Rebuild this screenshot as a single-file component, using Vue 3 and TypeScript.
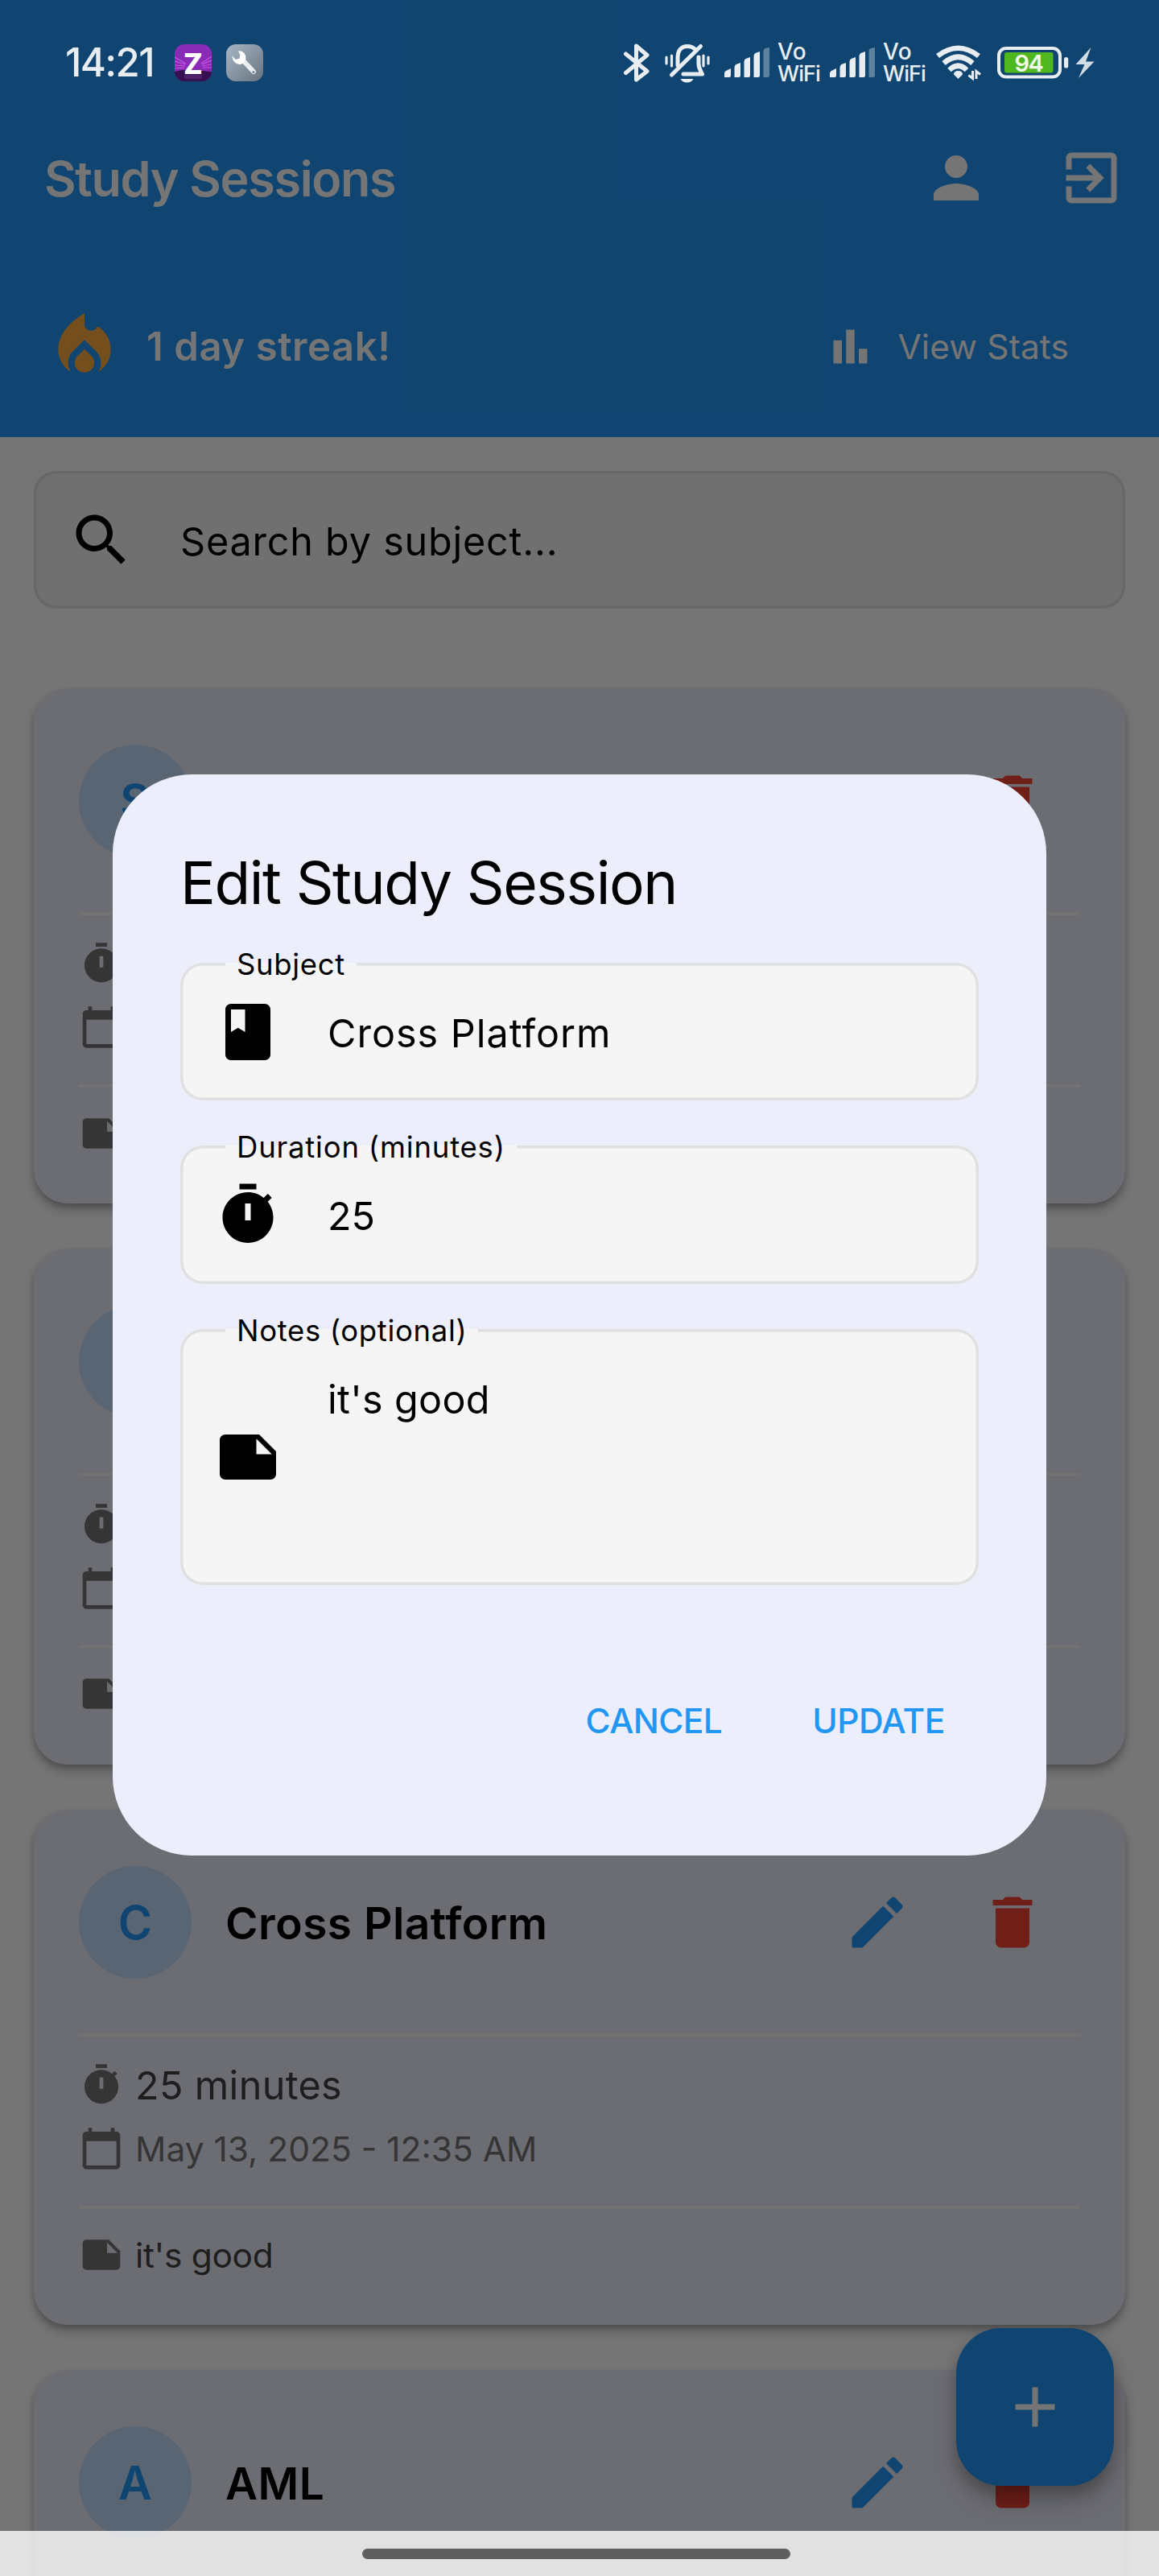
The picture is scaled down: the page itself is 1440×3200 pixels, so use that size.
<script setup lang="ts">
interface Session {
  subject: string
  minutes: number
  date: string
  notes: string
}

interface Field {
  label: string
  value: string
  icon: keyof typeof icons
  kind: string
}

// Material glyph outlines on a 24x24 grid
const icons = {
  person: 'M12 12c2.21 0 4-1.79 4-4s-1.79-4-4-4-4 1.79-4 4 1.79 4 4 4zm0 2c-2.67 0-8 1.34-8 4v2h16v-2c0-2.66-5.33-4-8-4z',
  exit: 'M10.09 15.59L11.5 17l5-5-5-5-1.41 1.41L12.67 11H3v2h9.67l-2.58 2.59zM19 3H5c-1.11 0-2 .9-2 2v4h2V5h14v14H5v-4H3v4c0 1.1.89 2 2 2h14c1.1 0 2-.9 2-2V5c0-1.1-.9-2-2-2z',
  fire: 'M16 6l-.44.55C14.38 8.02 12 7.19 12 5.3V2S4 6 4 13c0 2.92 1.56 5.47 3.89 6.86-.56-.79-.89-1.76-.89-2.8 0-1.32.52-2.56 1.47-3.5L12 10.1l3.53 3.47c.95.93 1.47 2.17 1.47 3.5 0 1.02-.31 1.96-.85 2.75 1.89-1.15 3.29-3.06 3.71-5.3.66-3.55-1.07-6.9-3.86-8.52zM12 12.9l-2.13 2.09c-.56.56-.87 1.29-.87 2.07C9 18.68 10.35 20 12 20s3-1.32 3-2.94c0-.78-.31-1.52-.87-2.07L12 12.9z',
  chart: 'M4 9h4v11H4zM16 13h4v7h-4zM10 4h4v16h-4z',
  search: 'M15.5 14h-.79l-.28-.27C15.41 12.59 16 11.11 16 9.5 16 5.91 13.09 3 9.5 3S3 5.91 3 9.5 5.91 16 9.5 16c1.61 0 3.09-.59 4.23-1.57l.27.28v.79l5 4.99L20.49 19l-4.99-5zm-6 0C7.01 14 5 11.99 5 9.5S7.01 5 9.5 5 14 7.01 14 9.5 11.99 14 9.5 14z',
  edit: 'M3 17.25V21h3.75L17.81 9.94l-3.75-3.75L3 17.25zM20.71 7.04c.39-.39.39-1.02 0-1.41l-2.34-2.34c-.39-.39-1.02-.39-1.41 0l-1.83 1.83 3.75 3.75 1.83-1.83z',
  trash: 'M6 19c0 1.1.9 2 2 2h8c1.1 0 2-.9 2-2V7H6v12zM19 4h-3.5l-1-1h-5l-1 1H5v2h14V4z',
  timer: 'M9 1h6v2H9zM19.03 7.39l1.42-1.42c-.43-.51-.9-.99-1.41-1.41l-1.42 1.42C16.07 4.74 14.12 4 12 4c-4.97 0-9 4.03-9 9s4.02 9 9 9 9-4.03 9-9c0-2.12-.74-4.07-1.97-5.61zM13 14h-2V8h2v6z',
  calendar: 'M20 3h-1V1h-2v2H7V1H5v2H4c-1.1 0-2 .9-2 2v16c0 1.1.9 2 2 2h16c1.1 0 2-.9 2-2V5c0-1.1-.9-2-2-2zm0 18H4V8h16v13z',
  note: 'M22 10l-6-6H4c-1.1 0-2 .9-2 2v12.01c0 1.1.9 1.99 2 1.99l16-.01c1.1 0 2-.89 2-1.99v-8zm-7-4.5l5.5 5.5H15V5.5z',
  book: 'M18 2H6c-1.1 0-2 .9-2 2v16c0 1.1.9 2 2 2h12c1.1 0 2-.9 2-2V4c0-1.1-.9-2-2-2zM6 4h5v8l-2.5-1.5L6 12V4z',
  add: 'M19 13h-6v6h-2v-6H5v-2h6V5h2v6h6v2z',
}

const sessions: Session[] = [
  { subject: 'Science', minutes: 25, date: 'May 13, 2025 - 12:35 AM', notes: "it's good" },
  { subject: 'Java', minutes: 25, date: 'May 13, 2025 - 12:35 AM', notes: "it's good" },
  { subject: 'Cross Platform', minutes: 25, date: 'May 13, 2025 - 12:35 AM', notes: "it's good" },
  { subject: 'AML', minutes: 25, date: 'May 13, 2025 - 12:35 AM', notes: "it's good" },
]

// The dialog hides the texts of the first two cards completely
const covered = (i: number) => i < 2

const fields: Field[] = [
  { label: 'Subject', value: 'Cross Platform', icon: 'book', kind: 'subject' },
  { label: 'Duration (minutes)', value: '25', icon: 'timer', kind: 'duration' },
  { label: 'Notes (optional)', value: "it's good", icon: 'note', kind: 'tall' },
]
</script>

<template>
  <div class="screen">
    <header class="header">
      <div class="appbar">
        <h1 class="app-title">Study Sessions</h1>
        <button class="icon-btn"><svg class="i24" viewBox="0 0 24 24"><path :d="icons.person" /></svg></button>
        <button class="icon-btn"><svg class="i24" viewBox="0 0 24 24"><path :d="icons.exit" /></svg></button>
      </div>
      <div class="streak">
        <svg class="i28" viewBox="0 0 24 24"><path :d="icons.fire" /></svg>
        <span class="streak-text">1 day streak!</span>
        <svg class="i18" viewBox="0 0 24 24"><path :d="icons.chart" /></svg>
        <span class="stats-text">View Stats</span>
      </div>
    </header>

    <main class="content">
      <div class="box search">
        <svg class="i24" viewBox="0 0 24 24"><path :d="icons.search" /></svg>
        <span class="box-text search-text">Search by subject...</span>
      </div>

      <article v-for="(s, i) in sessions" :key="s.subject" class="card">
        <div class="card-head">
          <div class="avatar">{{ s.subject[0] }}</div>
          <h2 class="card-title"><template v-if="!covered(i)">{{ s.subject }}</template></h2>
          <button class="icon-btn edit"><svg class="i24" viewBox="0 0 24 24"><path :d="icons.edit" /></svg></button>
          <button class="icon-btn trash"><svg class="i24" viewBox="0 0 24 24"><path :d="icons.trash" /></svg></button>
        </div>
        <hr class="divider" />
        <div class="details">
          <div class="row">
            <svg class="i16" viewBox="0 0 24 24"><path :d="icons.timer" /></svg>
            <span v-if="i === 2" class="minutes">{{ s.minutes }} minutes</span>
          </div>
          <div class="row">
            <svg class="i16" viewBox="0 0 24 24"><path :d="icons.calendar" /></svg>
            <span v-if="i === 2" class="date">{{ s.date }}</span>
          </div>
        </div>
        <hr class="divider" />
        <div class="row notes">
          <svg class="i16" viewBox="0 0 24 24"><path :d="icons.note" /></svg>
          <span v-if="i === 2" class="note">{{ s.notes }}</span>
        </div>
      </article>
    </main>

    <button class="fab"><svg class="i24" viewBox="0 0 24 24"><path :d="icons.add" /></svg></button>

    <div class="scrim">
      <section class="dialog">
        <h2 class="dialog-title">Edit Study Session</h2>
        <div class="fields">
          <div v-for="f in fields" :key="f.label" class="box field" :class="f.kind">
            <span class="label">{{ f.label }}</span>
            <svg class="i24" viewBox="0 0 24 24"><path :d="icons[f.icon]" /></svg>
            <span class="box-text">{{ f.value }}</span>
          </div>
        </div>
        <div class="actions">
          <button class="text-btn cancel">CANCEL</button>
          <button class="text-btn update">UPDATE</button>
        </div>
      </section>
    </div>

    <div class="statusbar">
      <span class="clock">14:21</span>
      <svg class="app-z" viewBox="0 0 46 46">
        <defs>
          <clipPath id="zclip"><rect width="46" height="46" rx="12" /></clipPath>
        </defs>
        <g clip-path="url(#zclip)">
          <rect width="46" height="46" fill="#8a2bb8" />
          <g stroke="#d55be8" stroke-width="1.2" opacity=".85">
            <path d="M0 16l14 8M0 21l13 4M0 26l13 1M0 30l12-1M46 15l-13 9M46 20l-12 5M46 25l-12 2M46 29l-11 0" />
          </g>
          <path d="M0 34Q10 31 23 32T46 34V46H0Z" fill="#37104f" />
          <rect x="12" y="38" width="22" height="5" rx="2" fill="#5c2a78" opacity=".7" />
          <text x="23" y="37" text-anchor="middle" class="z-letter">Z</text>
        </g>
      </svg>
      <svg class="app-tool" viewBox="0 0 46 46">
        <defs>
          <linearGradient id="tool" x1="0" y1="0" x2="1" y2="1">
            <stop offset="0" stop-color="#a9b6c4" />
            <stop offset="1" stop-color="#66737f" />
          </linearGradient>
        </defs>
        <rect width="46" height="46" rx="12" fill="url(#tool)" />
        <path d="M20 19L34 34" stroke="#e9eef3" stroke-width="6" stroke-linecap="round" />
        <path d="M15 8.500c5-1 10 3 9.300 9.500C24 23 19 26 14.500 24.500 10.500 23.500 7.500 19 7.300 14.500L12 19l4.500-1.500.8-4.500z" fill="#fff" />
        <circle cx="34" cy="34.500" r="1.600" fill="#76838f" />
      </svg>

      <svg class="bt" viewBox="774 52 32 48">
        <path d="M776.500 65L803 86.500 789.500 97V55L803 66.500 776.500 88.500" />
      </svg>
      <svg class="bell" viewBox="825 52 56 50">
        <path d="M841 80V71C841 61 846 56.500 853 56.500c4 0 7.500 1.500 10 4" />
        <path d="M869.500 56.500L833.500 92" />
        <path d="M867 70v8c0 6 2.500 9 4.500 13H848" />
        <path class="thin" d="M827 70v8M833.500 68v13M873 68v13M879 70v8" />
        <path class="solid" d="M844.500 97h16c-1.500 3-4.500 4.500-8 4.500s-6.500-1.500-8-4.500z" />
      </svg>
      <template v-for="n in 2" :key="n">
        <svg class="signal" viewBox="0 0 56 38">
          <path d="M0 37v-5q0-2 2-3l6-3v9q0 2-2 2zM12.500 37V25q0-3 2-4l5.500-2v16q0 2-2 2zM24.500 37V18q0-3 2-4l5.500-2v23q0 2-2 2zM36.500 37V11q0-3 2-4l5.500-2v30q0 2-2 2z" />
          <path d="M48.500 37V5q0-3 2-4L56 0v35q0 2-2 2z" opacity=".36" />
        </svg>
        <span class="vowifi"><span class="vo">Vo</span><span class="wifi-word">WiFi</span></span>
      </template>
      <svg class="wifi" viewBox="1162 54 58 48">
        <path class="arc" d="M1165 69.500Q1190.500 50 1216 69.500M1172.500 78.500Q1190.500 63 1208.500 78.500M1179.500 87Q1190.500 76.500 1201 87" />
        <path class="dot" d="M1190.500 98l-5.500-5.500q0-4.500 5.500-4.500t5.500 4.500z" />
        <path class="arrows" d="M1208.500 88v9.500l-5-4M1213 98v-9.500l5 4" />
      </svg>
      <svg class="battery" viewBox="1239 56 89 42">
        <rect class="shell" x="1241" y="59" width="76" height="35.500" rx="9" />
        <rect x="1248" y="64" width="60.500" height="25.500" rx="3" fill="#50b81f" />
        <rect x="1322" y="70" width="5.200" height="13.500" rx="2.600" fill="#e8edf2" />
        <text x="1278" y="87.700" text-anchor="middle" class="level">94</text>
      </svg>
      <svg class="bolt" viewBox="1336 57 24 40">
        <path d="M1355.500 58L1336.500 79h11L1340 96l19.500-20.500H1349z" />
      </svg>
    </div>

    <div class="navbar"><div class="pill"></div></div>
  </div>
</template>

<style>
body {
  margin: 0;
}
</style>

<style scoped>
.screen {
  position: relative;
  width: 1440px;
  height: 3200px;
  overflow: hidden;
  background: #fff;
  font-family: Inter, "Noto Sans", sans-serif;
  color: #000;
}
h1,
h2,
hr {
  margin: 0;
  border: 0;
}
button {
  border: 0;
  padding: 0;
  background: none;
  font: inherit;
  color: inherit;
}
svg {
  display: block;
  flex: none;
  fill: currentColor;
}
span,
h1,
h2 {
  white-space: nowrap;
}
.i16 { width: 56px; height: 56px; }
.i18 { width: 63px; height: 63px; }
.i24 { width: 84px; height: 84px; }
.i28 { width: 98px; height: 98px; color: #ffab40; }

.icon-btn {
  width: 168px;
  height: 132px;
  display: flex;
  align-items: center;
  justify-content: center;
}

/* header */
.header {
  height: 543px;
  box-sizing: border-box;
  padding-top: 155px;
  background: #2196f3;
  color: #fff;
}
.appbar {
  display: flex;
  align-items: center;
  height: 132px;
  padding-left: 55px;
}
.app-title {
  flex: 1;
  padding-top: 1px;
  font-size: 61px;
  font-weight: 600;
  line-height: 86px;
  letter-spacing: -1.35px;
}
.streak {
  display: flex;
  align-items: center;
  height: 98px;
  margin-top: 94px;
  padding: 0 112px 0 56px;
}
.streak-text {
  flex: 1;
  margin-left: 28px;
  font-size: 49px;
  font-weight: 600;
  letter-spacing: 0.59px;
}
.stats-text {
  margin-left: 27px;
  font-size: 42.5px;
  letter-spacing: 0.11px;
}

/* outlined boxes */
.box {
  position: relative;
  display: flex;
  align-items: center;
  height: 171.3px;
  box-sizing: border-box;
  padding-left: 42px;
  border-radius: 28px;
  background: #f5f5f5;
  box-shadow: inset 0 0 0 3.5px #e0e0e0;
}
.box-text {
  align-self: flex-start;
  margin-left: 57px;
  font-size: 48.5px;
  line-height: 176px;
  letter-spacing: 1px;
}
.search-text {
  margin-left: 56px;
  letter-spacing: 0.79px;
}

/* content */
.content {
  padding: 42px 42px 0;
}
.search {
  margin-bottom: 98.5px;
}
.card {
  height: 640.5px;
  box-sizing: border-box;
  margin-bottom: 56px;
  padding: 70px 56px 0;
  border-radius: 42px;
  background: #eceefb;
  box-shadow: 0 8px 14px rgba(0, 0, 0, 0.24), 0 4px 6px rgba(0, 0, 0, 0.14);
}
.card-head {
  display: flex;
  align-items: center;
  height: 140px;
  margin-bottom: 68.5px;
}
.avatar {
  display: flex;
  align-items: center;
  justify-content: center;
  width: 140px;
  height: 140px;
  border-radius: 50%;
  background: rgba(33, 150, 243, 0.2);
  color: #2196f3;
  font-size: 57.5px;
  font-weight: 600;
}
.card-title {
  flex: 1;
  margin-left: 42px;
  padding-top: 2px;
  font-size: 55px;
  font-weight: 600;
  letter-spacing: 0.5px;
}
.edit { color: #2196f3; }
.trash { color: #f44336; }
.divider {
  height: 3.5px;
  background: #fafaf6;
}
.details {
  padding: 21px 0 31.5px;
}
.row {
  display: flex;
  align-items: center;
  height: 79px;
  color: #757575;
}
.row span {
  margin-left: 14px;
}
.minutes {
  color: #424242;
  font-size: 48.5px;
  letter-spacing: 0.34px;
}
.date {
  font-size: 42.5px;
}
.notes {
  padding-top: 17.5px;
}
.note {
  padding-top: 2px;
  color: #424242;
  font-size: 42.5px;
  letter-spacing: -0.33px;
}
.fab {
  position: absolute;
  left: 1188px;
  top: 2892px;
  width: 196px;
  height: 196px;
  display: flex;
  align-items: center;
  justify-content: center;
  border-radius: 56px;
  background: #2196f3;
  color: #fff;
  box-shadow: 0 21px 35px rgba(0, 0, 0, 0.18), 0 10px 18px rgba(0, 0, 0, 0.2);
}

/* dialog */
.scrim {
  position: absolute;
  inset: 0;
  display: flex;
  justify-content: center;
  align-items: flex-start;
  box-sizing: border-box;
  padding-top: 961.5px;
  background: rgba(0, 0, 0, 0.54);
}
.dialog {
  width: 1160px;
  height: 1343.7px;
  box-sizing: border-box;
  padding: 84px;
  border-radius: 98px;
  background: #eceefb;
}
.dialog-title {
  margin-bottom: 48px;
  font-size: 73px;
  font-weight: 400;
  line-height: 102.5px;
  letter-spacing: -1.4px;
}
.fields {
  display: flex;
  flex-direction: column;
  gap: 56.2px;
}
.field.tall {
  height: 318.5px;
}
.label {
  position: absolute;
  left: 56px;
  top: -19px;
  padding: 0 14px;
  font-size: 36.5px;
  line-height: 42px;
  letter-spacing: 0.66px;
  background: linear-gradient(transparent 19px, #f5f5f5 19px, #f5f5f5 23px, transparent 23px);
}
.duration .label { letter-spacing: 0.8px; }
.duration .box-text { letter-spacing: 0; }
.tall .box-text { letter-spacing: 0.31px; }
.actions {
  display: flex;
  justify-content: flex-end;
  gap: 28px;
  margin-top: 105px;
}
.text-btn {
  height: 126px;
  padding: 0 42px;
  color: #2196f3;
  font-size: 42.5px;
  font-weight: 500;
}
.cancel { letter-spacing: -0.6px; }
.update { letter-spacing: -0.49px; }

/* status bar */
.statusbar {
  position: absolute;
  left: 0;
  top: 0;
  width: 1440px;
  height: 155px;
  box-sizing: border-box;
  padding: 0 80px 0 81px;
  display: flex;
  align-items: center;
  color: #e8edf2;
}
.clock {
  width: 136px;
  font-size: 49px;
  font-weight: 500;
  letter-spacing: -1.6px;
}
.app-z,
.app-tool {
  width: 46px;
  height: 46px;
}
.app-tool {
  margin: 0 auto 0 18px;
}
.z-letter {
  font-size: 35px;
  font-weight: 800;
  fill: #fff;
}
.bt,
.bell {
  fill: none;
  stroke: currentColor;
  stroke-width: 5;
  stroke-linejoin: round;
  stroke-linecap: round;
}
.bt { width: 32px; height: 48px; }
.bell { width: 56px; height: 50px; margin: 0 18px 0 19px; }
.bell .thin { stroke-width: 3.2; }
.bell .solid { fill: currentColor; stroke: none; }
.signal { width: 56px; height: 38px; }
.vowifi {
  display: flex;
  flex-direction: column;
  width: 53px;
  margin: 0 12px 0 10px;
  font-size: 27px;
  font-weight: 500;
  line-height: 28px;
}
.vo {
  font-size: 28px;
  letter-spacing: 0.5px;
}
.wifi-word { letter-spacing: -0.95px; }
.wifi { width: 58px; height: 48px; }
.wifi .arc {
  fill: none;
  stroke: currentColor;
  stroke-width: 6.5;
}
.wifi .arrows {
  fill: none;
  stroke: currentColor;
  stroke-width: 3;
}
.battery { width: 89px; height: 42px; margin: 0 8px 0 19px; }
.shell {
  fill: none;
  stroke: #e8edf2;
  stroke-width: 4;
}
.level {
  font-size: 29px;
  font-weight: 600;
  letter-spacing: -1.5px;
  fill: #f2fbec;
}
.bolt { width: 24px; height: 40px; color: #cfdce6; }

/* gesture bar */
.navbar {
  position: absolute;
  left: 0;
  bottom: 0;
  width: 1440px;
  height: 56px;
  display: flex;
  align-items: center;
  background: rgba(255, 255, 255, 0.795);
}
.pill {
  width: 532px;
  height: 13px;
  margin-left: 450px;
  border-radius: 7px;
  background: #5f5f5f;
}
</style>
